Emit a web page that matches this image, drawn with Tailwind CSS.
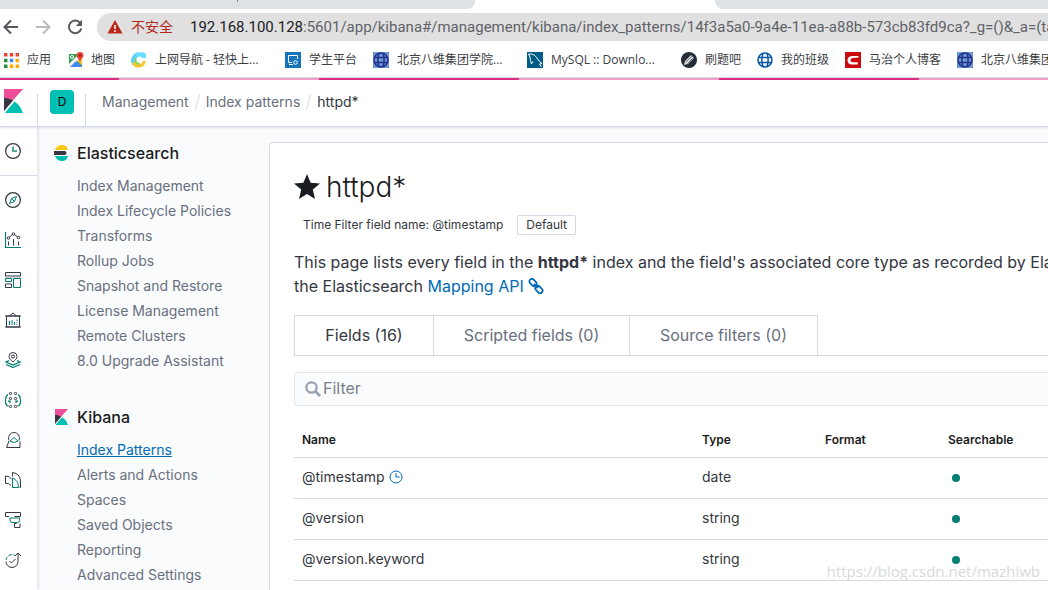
<!DOCTYPE html>
<html lang="zh-CN">
<head>
<meta charset="utf-8">
<title>Kibana - Index patterns</title>
<script src="https://cdn.jsdelivr.net/npm/@tailwindcss/browser@4"></script>
</head>
<body class="h-screen overflow-hidden bg-white font-['Inter','Noto_Sans_CJK_SC',sans-serif] text-[#343741]">
<div class="relative flex h-full flex-col overflow-hidden">

  <!-- Browser tab strip -->
  <div class="flex h-[9px] shrink-0 justify-between bg-white">
    <div class="flex w-[475px] justify-center rounded-br-lg bg-[#dee1e6]"><span class="h-[2px] w-px bg-[#80868b]"></span></div>
    <div class="w-[333px] rounded-bl-lg bg-[#dee1e6]"></div>
  </div>

  <!-- Address bar -->
  <div class="flex h-9 shrink-0 items-center pl-[2px] font-['Roboto','Noto_Sans_CJK_SC',sans-serif]">
    <button aria-label="Back" class="w-[18px]"><svg class="h-[18px] w-[18px]" viewBox="0 0 18 18" fill="none" stroke="#55585c" stroke-width="2"><path d="M16 9H3M9 2.500L2.500 9L9 15.500"/></svg></button>
    <button aria-label="Forward" class="ml-[14px] w-[18px]"><svg class="h-[18px] w-[18px]" viewBox="0 0 18 18" fill="none" stroke="#b9bbbd" stroke-width="2"><path d="M2 9H15M9 2.500L15.500 9L9 15.500"/></svg></button>
    <button aria-label="Reload" class="ml-[14px] w-[18px]"><svg class="h-[18px] w-[18px]" viewBox="0 0 18 18" fill="none" stroke="#55585c" stroke-width="2"><path d="M14.200 5A6.300 6.300 0 1 0 15.300 10.500"/><path d="M16 1.800V8H9.800Z" fill="#55585c" stroke="none"/></svg></button>
    <div class="ml-[13px] flex h-7 min-w-0 flex-1 items-center overflow-hidden rounded-l-full bg-[#e0e0e0] pl-[10px] whitespace-nowrap">
      <svg class="h-4 w-4 shrink-0" viewBox="0 0 16 16"><path d="M8 1L15.500 14.500H.5Z" fill="#b9261c"/><path d="M7.200 6h1.600v4H7.200zM7.200 11.300h1.600v1.600H7.200z" fill="#fff"/></svg>
      <span class="ml-2 text-[14px] text-[#b3261e]">不安全</span>
      <span class="ml-[7px] h-4 w-px bg-[#8a8a8a]"></span>
      <span class="ml-[10px] text-[15px] text-[#5f6368]"><span class="text-[#202124]">192.168.100.128</span>:5601/app/kibana#/management/kibana/index_patterns/14f3a5a0-9a4e-11ea-a88b-573cb83fd9ca?_g=()&amp;_a=(ta</span>
    </div>
  </div>

  <!-- Bookmarks -->
  <nav class="flex h-[33px] shrink-0 items-center overflow-hidden border-b border-[#dcdcdc] pb-[2px] pl-1 font-['Open_Sans','Noto_Sans_CJK_SC',sans-serif] text-[12px] whitespace-nowrap text-[#3c4043]">
    <a href="#" class="flex w-16 shrink-0 items-center gap-2"><svg class="h-[15px] w-[15px]" viewBox="0 0 13 13"><path d="M0 0h3v3H0zM5 0h3v3H5zM10 0h3v3h-3z" fill="#e94335"/><path d="M0 5h3v3H0z" fill="#1e8e3e"/><path d="M5 5h3v3H5z" fill="#4285f4"/><path d="M10 5h3v3h-3zM5 10h3v3H5zM10 10h3v3h-3z" fill="#f9ab00"/><path d="M0 10h3v3H0z" fill="#1e8e3e"/></svg>应用</a>
    <a href="#" class="flex w-[63px] shrink-0 items-center gap-[7px]"><svg class="h-4 w-4" viewBox="0 0 16 16"><path d="M1 2h13v13H1z" fill="#34a05a"/><path d="M1 15L8 8l6 7z" fill="#4285f4"/><path d="M1 12L11 2h3v3L3 15H1z" fill="#f5f5f5"/><path d="M9 9l5-5v9z" fill="#fbc02d"/><path d="M8 9l6 6H2z" fill="#4688f1"/><circle cx="4" cy="5" r="1.500" fill="none" stroke="#fff"/><path d="M12 0a3.500 3.500 0 0 1 3.500 3.500C15.500 6 12.500 7 12 10c-.5-3-3.500-4-3.500-6.500A3.500 3.500 0 0 1 12 0z" fill="#e94335"/><circle cx="12" cy="3.500" r="1.200" fill="#8d1f17"/></svg>地图</a>
    <a href="#" class="flex w-[154px] shrink-0 items-center gap-2"><svg class="h-4 w-4" viewBox="0 0 16 16" fill="none"><path d="M3.500 12A6 6 0 0 1 8 2.500" stroke="#5fd0f8" stroke-width="4.500"/><path d="M5 2Q9-1 15 1.500v4.500l-3.500 0C9 4 7 4 5 5z" fill="#6adcff"/><path d="M2.500 10.500c1.500 5 9.500 5 11-1.500" stroke="#f9c62b" stroke-width="3"/><path d="M4.500 6.500c-.5 4 2 6 4.500 5.500" stroke="#8fd14a" stroke-width="2"/></svg>上网导航 - 轻快上...</a>
    <a href="#" class="flex w-[88px] shrink-0 items-center gap-2"><svg class="h-4 w-4" viewBox="0 0 16 16" fill="none" stroke="#fff"><path d="M0 0h16v16H0z" fill="#1475bb" stroke="none"/><path d="M7 10.500H3.500v-7h9V7M4 12.500h4"/><circle cx="10.500" cy="10.500" r="1.800"/></svg>学生平台</a>
    <a href="#" class="flex w-[154px] shrink-0 items-center gap-2"><svg class="h-4 w-4" viewBox="0 0 16 16" fill="none" stroke="#24308f" stroke-width="1.500"><path d="M0 0h16v16H0z" fill="#6997cf" stroke="none"/><circle cx="8" cy="8" r="7"/><path d="M1.500 5.500h13M1.500 10.500h13M6 1.500C4.500 5 4.500 11 6 14.500M10 1.500c1.500 3.500 1.500 9.500 0 13"/></svg>北京八维集团学院...</a>
    <a href="#" class="flex w-[154px] shrink-0 items-center gap-2"><svg class="h-4 w-4" viewBox="0 0 16 16" fill="none" stroke="#fff"><path d="M0 0h16v16H0z" fill="#005c86" stroke="none"/><path d="M4.500 12L3.500 8.500 3 5 1.500 2Q8 1 11.500 8.500L15 11.500l-2.500 .5L14.500 15M4.500 12l1.500-2.500"/></svg>MySQL :: Downlo...</a>
    <a href="#" class="flex w-[76px] shrink-0 items-center gap-2"><svg class="h-4 w-4" viewBox="0 0 16 16"><circle cx="8" cy="8" r="8" fill="#262b38"/><path d="M3 13l1-4 6-6 3 3-6 6z" fill="#d9dadd"/><path d="M5 10l6-6M6.500 11.500l6-6" stroke="#555b66" stroke-width=".8"/></svg>刷题吧</a>
    <a href="#" class="flex w-[88px] shrink-0 items-center gap-2"><svg class="h-4 w-4" viewBox="0 0 16 16" fill="none" stroke="#0756a4" stroke-width="1.500"><circle cx="8" cy="8" r="7"/><path d="M1.500 5.500h13M1.500 10.500h13M6 1.500C4.500 5 4.500 11 6 14.500M10 1.500c1.500 3.500 1.500 9.500 0 13"/></svg>我的班级</a>
    <a href="#" class="flex w-28 shrink-0 items-center gap-2"><svg class="h-4 w-4" viewBox="0 0 16 16"><path d="M0 0h16v16H0z" fill="#ca0c0c"/><path d="M13.500 5.500V4H8C4.500 4 2.500 5.500 2.500 8.300S4.500 12.500 7 12.500h5.500l.5-2.200H8c-1.700 0-2.500-.8-2.500-2S6.500 6 8 6z" fill="#fff"/></svg>马治个人博客</a>
    <a href="#" class="flex shrink-0 items-center gap-2"><svg class="h-4 w-4" viewBox="0 0 16 16" fill="none" stroke="#24308f" stroke-width="1.500"><path d="M0 0h16v16H0z" fill="#6997cf" stroke="none"/><circle cx="8" cy="8" r="7"/><path d="M1.500 5.500h13M1.500 10.500h13M6 1.500C4.500 5 4.500 11 6 14.500M10 1.500c1.500 3.500 1.500 9.500 0 13"/></svg>北京八维集团</a>
  </nav>

  <!-- Loading stripes -->
  <div class="flex h-[2px] shrink-0 overflow-hidden">
    <span class="w-[119px] shrink-0 bg-[#dd2c84]"></span><span class="w-[200px] shrink-0 bg-[#f29cc6]"></span><span class="w-[200px] shrink-0 bg-[#dd2c84]"></span><span class="w-[200px] shrink-0 bg-[#f29cc6]"></span><span class="w-[200px] shrink-0 bg-[#dd2c84]"></span><span class="flex-1 bg-[#f29cc6]"></span>
  </div>

  <!-- Kibana header -->
  <header class="relative z-10 flex h-[47px] shrink-0 border-b border-[#d3dae6] bg-white shadow-[0_2px_2px_-1px_rgba(152,162,179,0.3)]">
    <a href="#" aria-label="Kibana" class="flex w-[37px] items-center pb-1 pl-1"><svg class="h-6 w-[19px]" viewBox="0 0 19 24"><path d="M0 0h19L0 21.500z" fill="#f04e98"/><path d="M0 9c3.500 0 6.500 1 9 2.500L0 22z" fill="#343741"/><path d="M10.500 12.500c4 2.500 7 6.500 8.200 11.500H.8z" fill="#00bfb3"/></svg></a>
    <div class="mt-[14px] flex w-[49px] border-x border-[#d3dae6]"></div>
    <button class="absolute top-[10px] left-[50px] h-6 w-6 rounded bg-[#00bfb3] text-[12px] leading-6 text-black">D</button>
    <nav class="flex items-center pb-[3px] pl-4 text-[14px] text-[#69707d]">
      <a href="#">Management</a>
      <span class="mx-2 h-4 w-px rotate-[15deg] bg-[#d3dae6]"></span>
      <a href="#">Index patterns</a>
      <span class="mx-2 h-4 w-px rotate-[15deg] bg-[#d3dae6]"></span>
      <span class="text-[#343741]">httpd*</span>
    </nav>
  </header>

  <div class="flex min-h-0 flex-1 bg-[#fafbfd]">
    <!-- App rail -->
    <nav class="flex w-[38px] shrink-0 flex-col border-r border-[#d3dae6]/60 bg-white shadow-[2px_0_2px_-1px_rgba(152,162,179,0.25)]">
      <a href="#" aria-label="Recently viewed" class="flex h-[49px] items-center border-b border-[#d3dae6] pl-[5px]"><svg class="h-4 w-4" viewBox="0 0 32 32" fill="none" stroke="#343741" stroke-width="2.500"><circle cx="16" cy="16" r="14.700"/><path d="M16 7v9h8" stroke="#42a099" stroke-width="3.500"/></svg></a>
      <div class="flex flex-col pt-1 pl-[5px]">
        <a href="#" aria-label="Discover" class="flex h-10 items-center"><svg class="h-4 w-4" viewBox="0 0 32 32" fill="none" stroke="#343741" stroke-width="2.500"><circle cx="16" cy="16" r="14.700"/><path d="M23 9l-4 10-10 4 4-10zM13 13l6 6" stroke="#017d73" stroke-width="2"/></svg></a>
        <a href="#" aria-label="Visualize" class="flex h-10 items-center"><svg class="h-4 w-4" viewBox="0 0 32 32" fill="none" stroke="#343741" stroke-width="2"><path d="M1 0v31h31" stroke="#017d73" stroke-width="2.500"/><path d="M7 19v8M17 14v13M27 19v8M9 10l6-5M19 5l6 5"/><circle cx="7" cy="12" r="2.500"/><circle cx="17" cy="4" r="2.500"/><circle cx="27" cy="11" r="2.500"/></svg></a>
        <a href="#" aria-label="Dashboard" class="flex h-10 items-center"><svg class="h-4 w-4" viewBox="0 0 32 32" fill="none" stroke="#343741" stroke-width="2"><path d="M1 1h30v7H1zM1 24h12v7H1z"/><path d="M0 10h32" stroke="#98a2b3"/><path d="M1 13h12v6H1zM17 13h14v18H17z" stroke="#017d73"/></svg></a>
        <a href="#" aria-label="Canvas" class="flex h-10 items-center"><svg class="h-4 w-4" viewBox="0 0 32 32" fill="none" stroke="#343741" stroke-width="2"><path d="M3 8h26v22H3zM0 8h32M0 30h32M9 8l7-6 7 6"/><path d="M9 18v8M14 16v10M19 20v6M24 15v3M24 20v2M24 24v2" stroke="#017d73"/></svg></a>
        <a href="#" aria-label="Maps" class="flex h-10 items-center"><svg class="h-4 w-4" viewBox="0 0 32 32" fill="none" stroke="#343741" stroke-width="2"><path d="M16 20c-4-4-8-6-8-11a8 8 0 0 1 16 0c0 5-4 7-8 11z"/><circle cx="16" cy="9" r="3"/><path d="M8 17l-6 3 14 6 14-6-6-3M2 25l14 6 14-6" stroke="#017d73" stroke-width="2.500"/></svg></a>
        <a href="#" aria-label="Machine Learning" class="flex h-10 items-center"><svg class="h-4 w-4" viewBox="0 0 32 32" fill="none" stroke="#343741" stroke-width="2"><circle cx="11" cy="3" r="2.300"/><circle cx="21" cy="3" r="2.300"/><circle cx="11" cy="13" r="2.300"/><circle cx="21" cy="13" r="2.300"/><circle cx="11" cy="29" r="2.300"/><circle cx="21" cy="29" r="2.300"/><path d="M6 5L2 9v5M1 14v8l3 5h3M6 18h4v4M26 5l4 4v5M31 14v8l-3 5h-3M26 18h-4v4" stroke="#017d73" stroke-width="2.500"/></svg></a>
        <a href="#" aria-label="Metrics" class="flex h-10 items-center"><svg class="h-4 w-4" viewBox="0 0 32 32" fill="none" stroke="#343741" stroke-width="2"><path d="M8 17C5 9 10 1 18 1s13 8 10 16M8 18L3 31h27V19"/><path d="M10 18l8-7 8 7q-8 6-16 0z" stroke="#017d73"/></svg></a>
        <a href="#" aria-label="Logs" class="flex h-10 items-center"><svg class="h-4 w-4" viewBox="0 0 32 32" fill="none" stroke="#343741" stroke-width="2"><path d="M15 9V1q15 2 16 17v13h-2M12 27L7 23H1V8q9 0 12 6"/><path d="M15 12q12 5 12 19H15z" stroke="#017d73"/></svg></a>
        <a href="#" aria-label="APM" class="flex h-10 items-center"><svg class="h-4 w-4" viewBox="0 0 32 32" fill="none" stroke="#343741" stroke-width="2"><path d="M8 9H1V1h30v8H19M19 31h11v-8M19 31v-8h4"/><path d="M10 12h19v5q0 4-4 4H14q-4 0-4-5z" stroke="#017d73"/></svg></a>
        <a href="#" aria-label="Uptime" class="flex h-10 items-center"><svg class="h-4 w-4" viewBox="0 0 32 32" fill="none" stroke="#343741" stroke-width="2"><path d="M2 19a12 12 0 0 0 24 0V3M20 8l6-6 6 6M9 18l4 4 8-8"/><path d="M2 16a12 12 0 0 1 18-9" stroke="#017d73" stroke-dasharray="7 3"/></svg></a>
      </div>
    </nav>

    <!-- Management menu -->
    <aside class="w-[231px] shrink-0 pt-[14px] pl-4">
      <h2 class="flex h-6 items-center gap-2 text-[16px] font-medium text-[#1a1c21]"><svg class="h-4 w-[15px]" viewBox="0 0 15 16"><path d="M1 5Q3 0 8 0t6 5z" fill="#fec514"/><path d="M0 6h10.500a2 2 0 0 1 0 4H0z" fill="#343741"/><path d="M1 11Q3 16 8 16t6-5z" fill="#00bfb3"/></svg>Elasticsearch</h2>
      <ul class="mt-2 pl-[23px] text-[14px] leading-[25px] text-[#69707d]">
        <li><a href="#">Index Management</a></li>
        <li><a href="#">Index Lifecycle Policies</a></li>
        <li><a href="#">Transforms</a></li>
        <li><a href="#">Rollup Jobs</a></li>
        <li><a href="#">Snapshot and Restore</a></li>
        <li><a href="#">License Management</a></li>
        <li><a href="#">Remote Clusters</a></li>
        <li><a href="#">8.0 Upgrade Assistant</a></li>
      </ul>
      <h2 class="mt-8 flex h-6 items-center gap-2 text-[16px] font-medium text-[#1a1c21]"><svg class="h-4 w-[15px]" viewBox="0 0 15 16"><path d="M1 0h13L1 14.500z" fill="#f04e98"/><path d="M1 6c2.500 0 4.500.7 6 1.700L1 15z" fill="#343741"/><path d="M8 8.300c3 1.700 5 4.300 5.800 7.700H1.500z" fill="#00bfb3"/></svg>Kibana</h2>
      <ul class="mt-2 pl-[23px] text-[14px] leading-[25px] text-[#69707d]">
        <li><a href="#" class="text-[#006bb4] underline">Index Patterns</a></li>
        <li><a href="#">Alerts and Actions</a></li>
        <li><a href="#">Spaces</a></li>
        <li><a href="#">Saved Objects</a></li>
        <li><a href="#">Reporting</a></li>
        <li><a href="#">Advanced Settings</a></li>
      </ul>
    </aside>

    <!-- Index pattern detail -->
    <main class="mt-[15px] min-w-0 flex-1 overflow-hidden rounded-tl border-t border-l border-[#d3dae6] bg-white pt-6 pl-6">
      <h1 class="flex h-10 items-center gap-[6px] text-[28px] font-light text-[#1a1c21]"><svg class="h-[26px] w-[26px]" viewBox="0 0 26 26" fill="#1a1c21"><path d="M13 0l3.600 8.800 9.400.7-7.200 6.100L21 25l-8-5.100L5 25l2.200-9.400L0 9.500l9.400-.7z"/></svg>httpd*</h1>
      <div class="mt-2 flex h-5 items-center text-[12px]">
        <span class="ml-[9px]">Time Filter field name: @timestamp</span>
        <span class="ml-[14px] rounded-xs border border-[#d3dae6] px-2 leading-[18px]">Default</span>
      </div>
      <p class="mt-[15px] text-[16px] leading-6 whitespace-nowrap">This page lists every field in the <strong class="font-bold">httpd*</strong> index and the field's associated core type as recorded by Ela<br>the Elasticsearch <a href="#" class="text-[#006bb4]">Mapping API <svg class="inline h-4 w-4 align-[-2px]" viewBox="0 0 16 16" fill="none" stroke="#006bb4" stroke-width="1.800"><rect x="1" y="2" width="8" height="5" rx="2.500" transform="rotate(45 5 4.500)"/><rect x="7" y="9" width="8" height="5" rx="2.500" transform="rotate(45 11 11.500)"/><path d="M6 6l4 4"/></svg></a></p>
      <div role="tablist" class="mt-[17px] flex h-[41px] text-[16px] text-[#69707d]">
        <button role="tab" class="w-[140px] border border-[#d3dae6] pb-[2px] text-[#343741]">Fields (16)</button>
        <button role="tab" class="w-[196px] border-y border-r border-[#d3dae6] pb-[2px]">Scripted fields (0)</button>
        <button role="tab" class="w-[188px] border-y border-r border-[#d3dae6] pb-[2px]">Source filters (0)</button>
        <span class="flex-1 border-b border-[#d3dae6]"></span>
      </div>
      <label class="mt-4 flex h-[34px] items-center gap-[2px] rounded-l-sm border-y border-l border-[#dfe4ee] bg-[#fbfcfd] pl-[10px]">
        <svg class="h-4 w-4" viewBox="0 0 16 16" fill="none" stroke="#98a2b3" stroke-width="2.200"><circle cx="6.500" cy="6.500" r="5.200"/><path d="M10.300 10.300L15 15" stroke-width="2.800"/></svg>
        <input type="text" placeholder="Filter" aria-label="Filter" class="min-w-0 flex-1 bg-transparent pb-[2px] text-[16px] outline-none placeholder:text-[#7a7f8a]">
      </label>
      <table class="mt-[15px] w-full table-fixed text-left text-[14px]">
        <colgroup><col class="w-[400px]"><col class="w-[123px]"><col class="w-[123px]"><col></colgroup>
        <thead><tr class="h-9 border-b border-[#d3dae6] text-[12px] text-[#1a1c21]"><th class="pt-[2px] pl-2 font-semibold">Name</th><th class="pt-[2px] pl-2 font-semibold">Type</th><th class="pt-[2px] pl-2 font-semibold">Format</th><th class="pt-[2px] pl-2 font-semibold">Searchable</th></tr></thead>
        <tbody>
          <tr class="h-[41px] border-b border-[#d3dae6]"><td class="pb-[2px] pl-2"><span class="flex items-center gap-1">@timestamp <svg class="h-[14px] w-[14px]" viewBox="0 0 14 14" fill="none" stroke="#006bb4"><circle cx="7" cy="7" r="6"/><path d="M7 3v4h3.500"/></svg></span></td><td class="pb-[2px] pl-2">date</td><td></td><td class="pl-3"><svg class="h-2 w-2" viewBox="0 0 8 8"><circle cx="4" cy="4" r="4" fill="#017d73"/></svg></td></tr>
          <tr class="h-[41px] border-b border-[#d3dae6]"><td class="pb-[2px] pl-2">@version</td><td class="pb-[2px] pl-2">string</td><td></td><td class="pl-3"><svg class="h-2 w-2" viewBox="0 0 8 8"><circle cx="4" cy="4" r="4" fill="#017d73"/></svg></td></tr>
          <tr class="h-[41px] border-b border-[#d3dae6]"><td class="pb-[2px] pl-2">@version.keyword</td><td class="pb-[2px] pl-2">string</td><td></td><td class="pl-3"><svg class="h-2 w-2" viewBox="0 0 8 8"><circle cx="4" cy="4" r="4" fill="#017d73"/></svg></td></tr>
        </tbody>
      </table>
    </main>
  </div>

  <div class="absolute right-2 bottom-2 z-20 font-['Open_Sans',sans-serif] text-[15px] text-[#d9d9dc]">https://blog.csdn.net/mazhiwb</div>
</div>
</body>
</html>
